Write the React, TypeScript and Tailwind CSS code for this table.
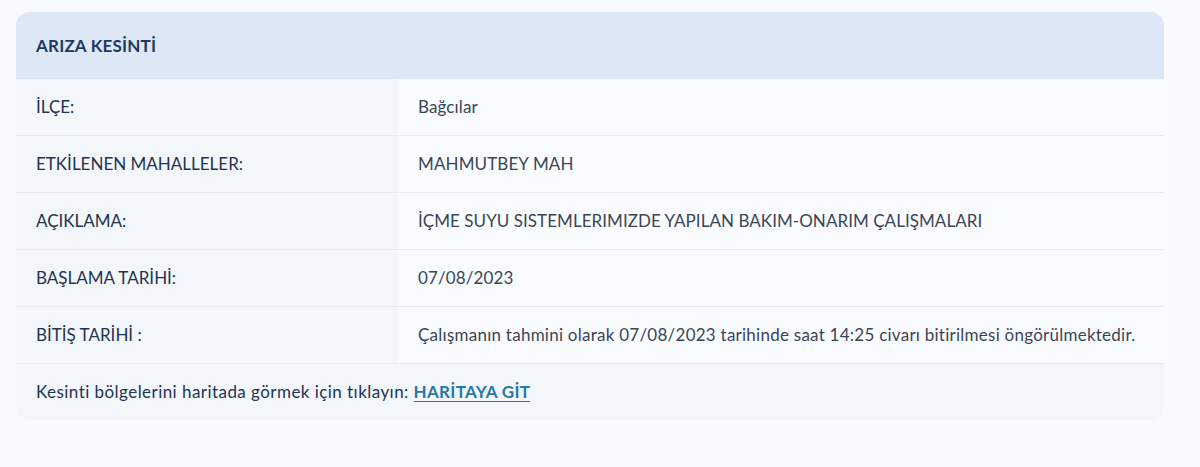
import React from "react";

const rows: [string, string, string][] = [
  ["İLÇE:", "Bağcılar", "tracking-[0.12px]"],
  ["ETKİLENEN MAHALLELER:", "MAHMUTBEY MAH", "tracking-[0.12px]"],
  ["AÇIKLAMA:", "İÇME SUYU SISTEMLERIMIZDE YAPILAN BAKIM-ONARIM ÇALIŞMALARI", "tracking-[0.05px]"],
  ["BAŞLAMA TARİHİ:", "07/08/2023", "tracking-[0.12px]"],
  ["BİTİŞ TARİHİ :", "Çalışmanın tahmini olarak 07/08/2023 tarihinde saat 14:25 civarı bitirilmesi öngörülmektedir.", "tracking-[0.25px]"],
];

export default function App() {
  return (
    <div
      className="w-[1200px] h-[467px] bg-[#f8fafd] pt-[12px] pl-[16px]"
      style={{ fontFamily: "Lato, 'Open Sans', sans-serif" }}
    >
      <div className="w-[1148px] rounded-[14px] overflow-hidden bg-[#f9fbfe]">
        <div className="h-[67px] bg-[#dde7f6] flex items-center px-[20px]">
          <span className="text-[17px] font-bold tracking-[0.2px] text-[#1d3a5f]">ARIZA KESİNTİ</span>
        </div>
        {rows.map(([k, v, t], i) => (
          <div key={i} className="flex h-[57px] border-b border-[#e6eaf0]">
            <div className="w-[382px] bg-[#f3f6fb] flex items-center px-[20px] text-[17px] text-[#1e3550]">
              {k}
            </div>
            <div className={`flex-1 flex items-center px-[20px] text-[17px] text-[#3a4656] ${t}`}>{v}</div>
          </div>
        ))}
        <div className="h-[56px] bg-[#f3f6fb] flex items-center px-[20px] text-[17px] text-[#1e3550]">
          <span className="tracking-[0.45px]">Kesinti bölgelerini haritada görmek için tıklayın:&nbsp;</span>
          <a className="font-bold tracking-[0.3px] text-[#2878a8] underline underline-offset-[3px]">HARİTAYA GİT</a>
        </div>
      </div>
    </div>
  );
}
